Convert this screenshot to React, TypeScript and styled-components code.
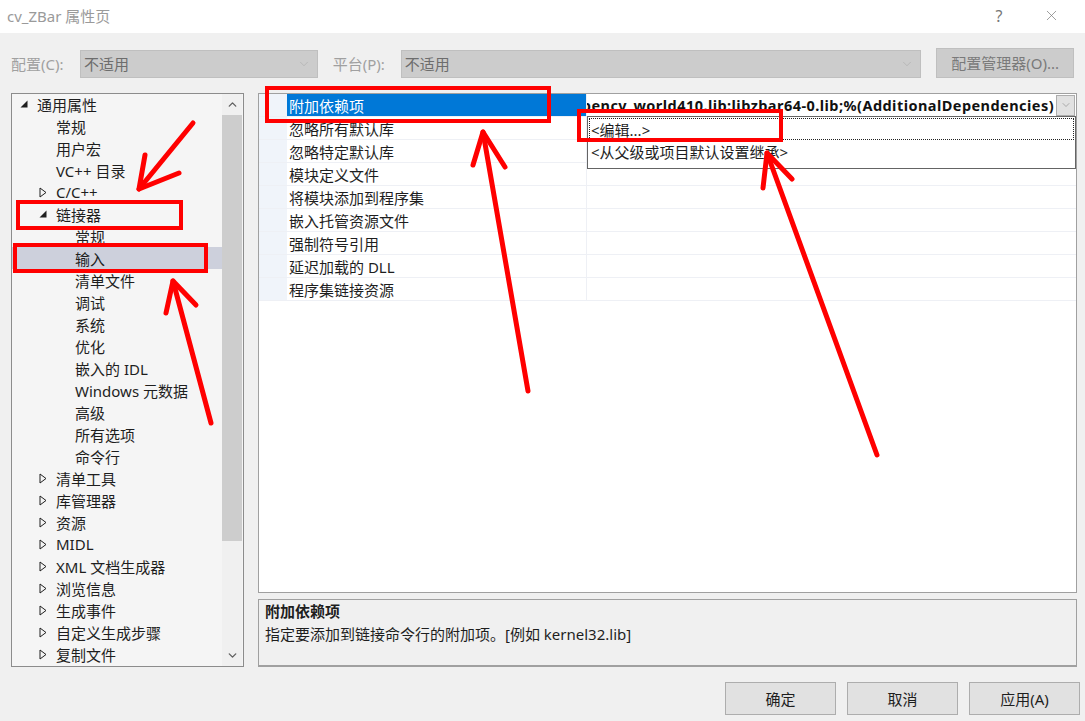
import React from 'react'
import styled, { createGlobalStyle } from 'styled-components'
import { ChevronDown, ChevronUp, X } from 'lucide-react'

const GlobalStyle = createGlobalStyle`
    html, body {
        margin: 0;
        padding: 0;
        background: #f0f0f0;
    }
    body {
        font-family: "Noto Sans", "Noto Sans CJK SC", sans-serif;
        font-size: 15px;
        color: #1e1e1e;
    }
`;

const FONT = `"Noto Sans", "Noto Sans CJK SC", sans-serif`;

const Window = styled.div`
    position: relative;
    width: 1085px;
    height: 721px;
    display: flex;
    flex-direction: column;
    background: #f0f0f0;
    overflow: hidden;
    font-family: ${FONT};
`;

const TitleBar = styled.div`
    height: 33px;
    flex: none;
    background: #fff;
    display: flex;
    align-items: center;
    padding-left: 7px;
    padding-right: 18px;
    padding-bottom: 2px;
    box-sizing: border-box;
`;

const Title = styled.div`
    flex: 1;
    color: #9a9a9a;
    font-size: 15px;
    line-height: 20px;
`;

const TitleButton = styled.div<{ $w: number }>`
    width: ${(p) => p.$w}px;
    display: flex;
    justify-content: center;
    align-items: center;
    color: #777;
    font-size: 16px;
`;

const ConfigRow = styled.div`
    height: 60px;
    flex: none;
    display: flex;
    align-items: center;
    padding: 0 11px;
    box-sizing: border-box;
    padding-top: 1px;
`;

const Label = styled.span<{ $w: number }>`
    width: ${(p) => p.$w}px;
    color: #a0a0a0;
    font-size: 15px;
    line-height: 20px;
`;

const Combo = styled.div<{ $w: number }>`
    width: ${(p) => p.$w}px;
    height: 28px;
    box-sizing: border-box;
    background: #cccccc;
    border: 1px solid #bfbfbf;
    display: flex;
    align-items: center;
    padding: 0 6px 0 3px;
    color: #6d6d6d;
    font-size: 15px;
    margin-right: 15px;
    span { flex: 1; }
    svg { color: #a8a8a8; }
`;

const GrayButton = styled.div`
    margin-left: auto;
    width: 138px;
    height: 30px;
    box-sizing: border-box;
    background: #cccccc;
    border: 1px solid #bfbfbf;
    color: #7a7a7a;
    display: flex;
    align-items: center;
    justify-content: center;
    font-size: 15px;
    margin-top: -2px;
`;

const Main = styled.div`
    height: 574px;
    flex: none;
    display: flex;
    padding-left: 11px;
    gap: 14px;
`;

const TreePanel = styled.div`
    width: 233px;
    box-sizing: border-box;
    border: 1px solid #8c8c8c;
    background: #f5f5f5;
    display: flex;
`;

const TreeList = styled.div`
    flex: 1;
    overflow: hidden;
    margin-top: -1px;
`;

const TreeRow = styled.div<{ $level: number; $selected?: boolean }>`
    height: 22px;
    display: flex;
    align-items: center;
    padding-left: ${(p) => 8 + p.$level * 19}px;
    background: ${(p) => (p.$selected ? '#cdd0dc' : 'transparent')};
    white-space: nowrap;
    font-size: 15px;
    color: #1e1e1e;
`;

const Twisty = styled.span`
    width: 17px;
    flex: none;
    display: flex;
    align-items: center;
    justify-content: flex-start;
`;

const ScrollBar = styled.div`
    width: 20px;
    flex: none;
    background: #f0f0f0;
    display: flex;
    flex-direction: column;
    margin-right: 1px;
`;

const ScrollArrow = styled.div`
    height: 21px;
    display: flex;
    align-items: center;
    justify-content: center;
    color: #606060;
`;

const ScrollThumb = styled.div`
    height: 426px;
    background: #cdcdcd;
`;

const RightColumn = styled.div`
    width: 819px;
    display: flex;
    flex-direction: column;
    gap: 6px;
`;

const Grid = styled.div`
    position: relative;
    height: 500px;
    box-sizing: border-box;
    border: 1px solid #a0a0a0;
    background: #fff;
`;

const GridRow = styled.div`
    height: 23px;
    display: flex;
    box-sizing: border-box;
    border-bottom: 1px solid #eef0f5;
`;

const Gutter = styled.div`
    width: 28px;
    flex: none;
    background: #f0f4fa;
`;

const NameCell = styled.div<{ $selected?: boolean }>`
    width: 300px;
    flex: none;
    box-sizing: border-box;
    padding-left: 2px;
    display: flex;
    align-items: center;
    background: ${(p) => (p.$selected ? '#0078d7' : '#fff')};
    color: ${(p) => (p.$selected ? '#fff' : '#1e1e1e')};
    border-right: 1px solid #eef0f5;
    font-size: 15px;
    white-space: nowrap;
`;

const ValueCell = styled.div`
    flex: 1;
    display: flex;
    align-items: center;
    min-width: 0;
`;

const ValueText = styled.div`
    flex: 1;
    min-width: 0;
    display: flex;
    justify-content: flex-end;
    overflow: hidden;
    white-space: nowrap;
    font-weight: 700;
    font-size: 14.5px;
    letter-spacing: 0.45px;
    color: #111;
    padding-right: 2px;
`;

const DropButton = styled.div`
    width: 19px;
    height: 21px;
    flex: none;
    box-sizing: border-box;
    margin-right: 1px;
    background: #e1e1e1;
    border: 1px solid #adadad;
    display: flex;
    align-items: center;
    justify-content: center;
    color: #707070;
`;

const DropList = styled.div`
    position: absolute;
    left: 328px;
    top: 22px;
    width: 489px;
    height: 53px;
    box-sizing: border-box;
    background: #fff;
    border: 1px solid #646464;
    padding: 1px;
    z-index: 2;
`;

const DropItem = styled.div<{ $focused?: boolean }>`
    height: 22px;
    box-sizing: border-box;
    display: flex;
    align-items: center;
    padding-left: 2px;
    font-size: 15px;
    color: #1e1e1e;
    outline: ${(p) => (p.$focused ? '1px dotted #222' : 'none')};
    outline-offset: -1px;
`;

const Description = styled.div`
    height: 68px;
    box-sizing: border-box;
    border: 1px solid #a0a0a0;
    border-bottom: 2px solid #a0a0a0;
    background: #f0f0f0;
    padding: 0 6px;
    font-size: 15px;
    line-height: 23px;
`;

const DescTitle = styled.div`
    font-weight: 700;
`;

const Footer = styled.div`
    flex: 1;
    display: flex;
    justify-content: flex-end;
    align-items: flex-start;
    gap: 11px;
    padding-right: 5px;
    padding-top: 15px;
`;

const DialogButton = styled.div`
    width: 111px;
    height: 33px;
    box-sizing: border-box;
    background: #e1e1e1;
    border: 1px solid #adadad;
    display: flex;
    align-items: center;
    justify-content: center;
    font-size: 15px;
    color: #1e1e1e;
    padding-bottom: 1px;
`;

const Overlay = styled.svg`
    position: absolute;
    left: 0;
    top: 0;
    pointer-events: none;
    z-index: 5;
`;

const Expanded = () => (
    <svg width="8" height="8" viewBox="0 0 8 8">
        <path d="M7.5 0.5 L7.5 7.5 L0.5 7.5 Z" fill="#1e1e1e" />
    </svg>
);

const Collapsed = () => (
    <svg width="8" height="11" viewBox="0 0 8 11">
        <path d="M1 1 L7 5.5 L1 10 Z" fill="none" stroke="#1e1e1e" strokeWidth="1" />
    </svg>
);

type Node = { label: string; level: number; state?: 'open' | 'closed'; selected?: boolean };

const treeItems: Node[] = [
    { label: '通用属性', level: 0, state: 'open' },
    { label: '常规', level: 1 },
    { label: '用户宏', level: 1 },
    { label: 'VC++ 目录', level: 1 },
    { label: 'C/C++', level: 1, state: 'closed' },
    { label: '链接器', level: 1, state: 'open' },
    { label: '常规', level: 2 },
    { label: '输入', level: 2, selected: true },
    { label: '清单文件', level: 2 },
    { label: '调试', level: 2 },
    { label: '系统', level: 2 },
    { label: '优化', level: 2 },
    { label: '嵌入的 IDL', level: 2 },
    { label: 'Windows 元数据', level: 2 },
    { label: '高级', level: 2 },
    { label: '所有选项', level: 2 },
    { label: '命令行', level: 2 },
    { label: '清单工具', level: 1, state: 'closed' },
    { label: '库管理器', level: 1, state: 'closed' },
    { label: '资源', level: 1, state: 'closed' },
    { label: 'MIDL', level: 1, state: 'closed' },
    { label: 'XML 文档生成器', level: 1, state: 'closed' },
    { label: '浏览信息', level: 1, state: 'closed' },
    { label: '生成事件', level: 1, state: 'closed' },
    { label: '自定义生成步骤', level: 1, state: 'closed' },
    { label: '复制文件', level: 1, state: 'closed' },
];

const properties = [
    '附加依赖项',
    '忽略所有默认库',
    '忽略特定默认库',
    '模块定义文件',
    '将模块添加到程序集',
    '嵌入托管资源文件',
    '强制符号引用',
    '延迟加载的 DLL',
    '程序集链接资源',
];

// red marks drawn on top of the screenshot
const marks = {
    rects: [
        { x: 18, y: 202, w: 163, h: 26 },
        { x: 15, y: 245, w: 191, h: 26 },
        { x: 267, y: 88, w: 282, h: 33 },
        { x: 579, y: 111, w: 202, h: 29 },
    ],
    arrows: [
        { tail: [193, 123], tip: [139, 189], a: [145, 155], b: [179, 173] },
        { tail: [211, 423], tip: [173, 281], a: [166, 313], b: [196, 305] },
        { tail: [528, 391], tip: [483, 132], a: [473, 165], b: [505, 167] },
        { tail: [877, 455], tip: [767, 153], a: [763, 188], b: [792, 179] },
    ],
};

export default function App() {
    return (
        <Window>
            <GlobalStyle />
            <TitleBar>
                <Title>cv_ZBar 属性页</Title>
                <TitleButton $w={40}>?</TitleButton>
                <TitleButton $w={32} style={{ marginLeft: 16 }}>
                    <X size={17} strokeWidth={1} />
                </TitleButton>
            </TitleBar>

            <ConfigRow>
                <Label $w={69}>配置(C):</Label>
                <Combo $w={238}>
                    <span>不适用</span>
                    <ChevronDown size={14} strokeWidth={1} />
                </Combo>
                <Label $w={68}>平台(P):</Label>
                <Combo $w={521}>
                    <span>不适用</span>
                    <ChevronDown size={14} strokeWidth={1} />
                </Combo>
                <GrayButton>配置管理器(O)...</GrayButton>
            </ConfigRow>

            <Main>
                <TreePanel>
                    <TreeList>
                        {treeItems.map((item, i) => (
                            <TreeRow key={i} $level={item.level} $selected={item.selected}>
                                <Twisty>
                                    {item.state === 'open' && <Expanded />}
                                    {item.state === 'closed' && <Collapsed />}
                                </Twisty>
                                {item.label}
                            </TreeRow>
                        ))}
                    </TreeList>
                    <ScrollBar>
                        <ScrollArrow>
                            <ChevronUp size={13} strokeWidth={2.5} />
                        </ScrollArrow>
                        <ScrollThumb />
                        <div style={{ flex: 1 }} />
                        <ScrollArrow>
                            <ChevronDown size={13} strokeWidth={2.5} />
                        </ScrollArrow>
                    </ScrollBar>
                </TreePanel>

                <RightColumn>
                    <Grid>
                        {properties.map((name, i) => (
                            <GridRow key={i}>
                                <Gutter />
                                <NameCell $selected={i === 0}>{name}</NameCell>
                                <ValueCell>
                                    {i === 0 && (
                                        <>
                                            <ValueText>
                                                <span>opencv_world410.lib:libzbar64-0.lib;%(AdditionalDependencies)</span>
                                            </ValueText>
                                            <DropButton>
                                                <ChevronDown size={12} strokeWidth={1} />
                                            </DropButton>
                                        </>
                                    )}
                                </ValueCell>
                            </GridRow>
                        ))}
                        <DropList>
                            <DropItem $focused>&lt;编辑...&gt;</DropItem>
                            <DropItem>&lt;从父级或项目默认设置继承&gt;</DropItem>
                        </DropList>
                    </Grid>
                    <Description>
                        <DescTitle>附加依赖项</DescTitle>
                        <div>指定要添加到链接命令行的附加项。[例如 kernel32.lib]</div>
                    </Description>
                </RightColumn>
            </Main>

            <Footer>
                <DialogButton>确定</DialogButton>
                <DialogButton>取消</DialogButton>
                <DialogButton>应用(A)</DialogButton>
            </Footer>

            <Overlay width="1085" height="721" viewBox="0 0 1085 721">
                {marks.rects.map((r, i) => (
                    <rect key={i} x={r.x} y={r.y} width={r.w} height={r.h} fill="none" stroke="#ff0000" strokeWidth="4" />
                ))}
                {marks.arrows.map((a, i) => (
                    <g key={i} stroke="#ff0000" strokeWidth="5" strokeLinecap="round" strokeLinejoin="round" fill="none">
                        <line x1={a.tail[0]} y1={a.tail[1]} x2={a.tip[0]} y2={a.tip[1]} />
                        <polyline points={`${a.a[0]},${a.a[1]} ${a.tip[0]},${a.tip[1]} ${a.b[0]},${a.b[1]}`} />
                    </g>
                ))}
            </Overlay>
        </Window>
    );
}
